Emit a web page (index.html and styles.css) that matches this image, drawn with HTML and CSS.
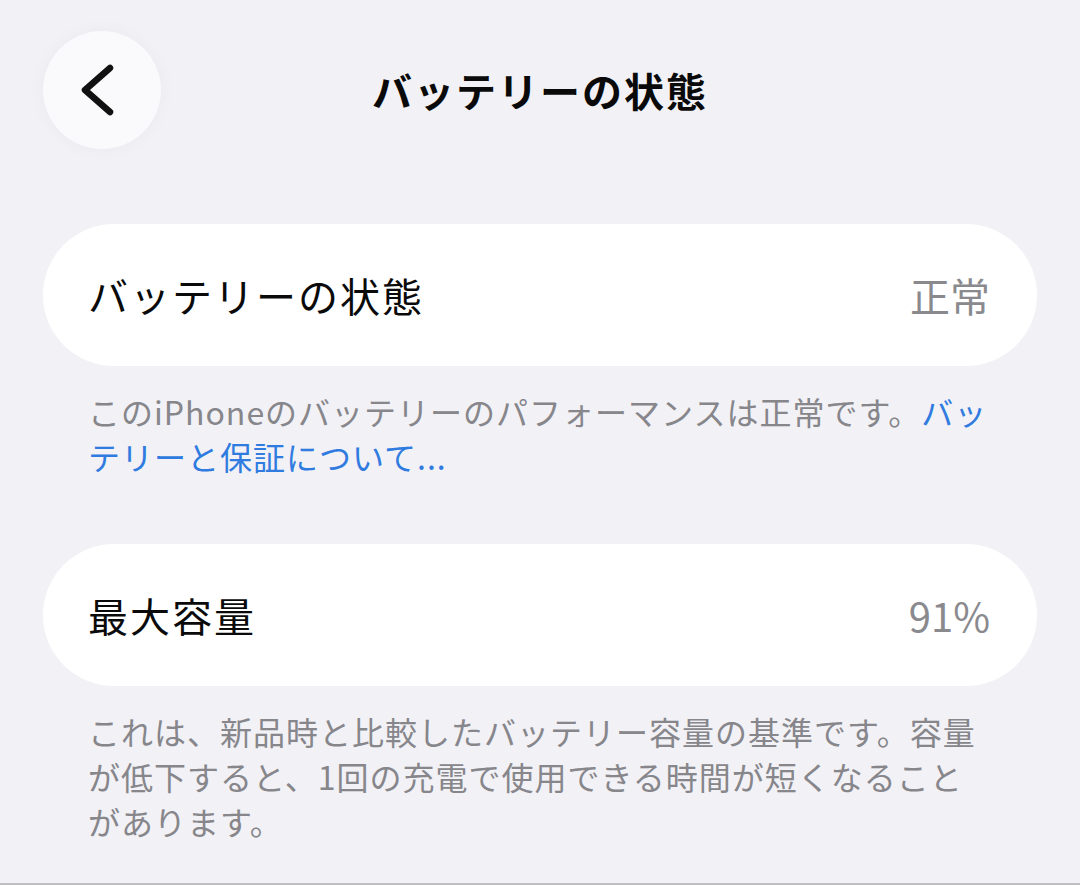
FILE: index.html
```html
<!DOCTYPE html>
<html lang="ja">
<head>
    <meta charset="UTF-8">
    <meta name="viewport" content="width=device-width, initial-scale=1.0">
    <title>バッテリーの状態</title>
    <link rel="stylesheet" href="styles.css">
</head>
<body>
    <div class="nav">
        <div class="back">
            <svg width="118" height="118" viewBox="0 0 118 118">
                <polyline points="67,37 42,59 67,81" fill="none" stroke="#111" stroke-width="6.5" stroke-linecap="round" stroke-linejoin="round"/>
            </svg>
        </div>
        <div class="title">バッテリーの状態</div>
        <div class="spacer"></div>
    </div>

    <div class="card">
        <span class="label">バッテリーの状態</span>
        <span class="value">正常</span>
    </div>
    <p class="note">このiPhoneのバッテリーのパフォーマンスは正常です。<span class="link">バッテリーと保証について...</span></p>

    <div class="card second">
        <span class="label">最大容量</span>
        <span class="value">91%</span>
    </div>
    <p class="note">これは、新品時と比較したバッテリー容量の基準です。容量が低下すると、1回の充電で使用できる時間が短くなることがあります。</p>
</body>
</html>
```

FILE: styles.css
```css
html{background-color: #f2f1f6;}
body{
    margin: 0;
    height: 885px;
    box-sizing: border-box;
    padding-top: 31px;
    border-bottom: 2px solid #bfbfc1;
    background-color: #f2f1f6;
    font-family: "Noto Sans CJK JP", "Noto Sans", sans-serif;
    overflow: hidden;
}

.nav{
    display: flex;
    align-items: center;
    padding: 0 43px;
    height: 118px;
}
.back{
    width: 118px;
    height: 118px;
    border-radius: 50%;
    background-color: #fafafc;
    box-shadow: 0 0 18px rgba(0,0,0,0.035);
}
.back svg{display: block;}
.title{
    flex: 1;
    text-align: center;
    font-size: 40px;
    font-weight: 700;
    letter-spacing: 2px;
    color: #0a0a0a;
}
.spacer{width: 118px;}

.card{
    margin: 75px 43px 0;
    height: 142px;
    border-radius: 71px;
    background-color: #ffffff;
    display: flex;
    align-items: center;
    justify-content: space-between;
    padding: 0 47px 0 45px;
}
.card.second{margin-top: 65px;}
.card .label{
    font-size: 40px;
    letter-spacing: 2px;
    color: #0a0a0a;
}
.card .value{
    font-size: 40px;
    color: #8a8a8e;
}

.note{
    margin: 23px 43px 0;
    padding: 0 45px;
    font-size: 32px;
    line-height: 45px;
    letter-spacing: 1px;
    color: #86868b;
}
.note .link{color: #2f7be0;}
```
